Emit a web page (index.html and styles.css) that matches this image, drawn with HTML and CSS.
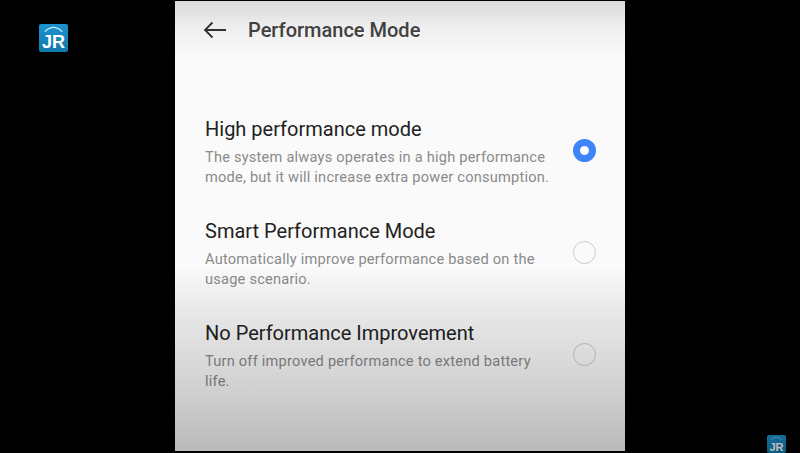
FILE: index.html
```html
<!DOCTYPE html>
<html lang="en">
<head>
    <meta charset="UTF-8">
    <meta name="viewport" content="width=device-width, initial-scale=1.0">
    <title>Performance Mode</title>
    <link rel="stylesheet" href="styles.css">
</head>
<body>
    <div class="logo logo-big">
        <svg class="logo-arc" viewBox="0 0 30 30"><path d="M6 8 Q15 -1 24 8" fill="none" stroke="#d5edf8" stroke-width="1.2"/></svg>
        <span class="logo-text">JR</span>
    </div>

    <div class="screen">
        <div class="header">
            <svg class="back" width="24" height="18" viewBox="0 0 24 18"><path d="M23 9H2M9.5 1.5 2 9l7.5 7.5" fill="none" stroke="#333" stroke-width="1.8"/></svg>
            <h1>Performance Mode</h1>
        </div>

        <div class="options">
            <div class="option">
                <div class="option-text">
                    <div class="option-title">High performance mode</div>
                    <div class="option-desc">The system always operates in a high performance mode, but it will increase extra power consumption.</div>
                </div>
                <div class="radio checked"></div>
            </div>
            <div class="option">
                <div class="option-text">
                    <div class="option-title">Smart Performance Mode</div>
                    <div class="option-desc">Automatically improve performance based on the usage scenario.</div>
                </div>
                <div class="radio"></div>
            </div>
            <div class="option">
                <div class="option-text">
                    <div class="option-title">No Performance Improvement</div>
                    <div class="option-desc">Turn off improved performance to extend battery life.</div>
                </div>
                <div class="radio"></div>
            </div>
        </div>
    </div>

    <div class="logo logo-small">
        <svg class="logo-arc" viewBox="0 0 30 30"><path d="M6 8 Q15 -1 24 8" fill="none" stroke="#8fc4dc" stroke-width="1.2"/></svg>
        <span class="logo-text">JR</span>
    </div>
</body>
</html>
```

FILE: styles.css
```css
body {
    margin: 0;
    height: 453px;
    overflow: hidden;
    background-color: #000;
    font-family: Roboto, "Noto Sans", sans-serif;
    display: flex;
    justify-content: center;
}

.screen {
    position: relative;
    width: 450px;
    height: 450px;
    margin-top: 1px;
    background-color: #fafafa;
}

/* shadow of the video fade, darkens text too */
.screen::after {
    content: "";
    position: absolute;
    inset: 0;
    pointer-events: none;
    background: linear-gradient(to bottom, rgba(0, 0, 0, 0.13) 0, rgba(0, 0, 0, 0.05) 25px, rgba(0, 0, 0, 0) 55px, rgba(0, 0, 0, 0) 265px, rgba(0, 0, 0, 0.08) 315px, rgba(0, 0, 0, 0.17) 390px, rgba(0, 0, 0, 0.26) 450px);
}

.header {
    display: flex;
    align-items: center;
    height: 58px;
    padding-left: 28px;
}

.back {
    flex-shrink: 0;
}

h1 {
    margin: 0 0 0 21px;
    font-size: 20px;
    font-weight: 500;
    color: #444;
}

.options {
    margin-top: 42px;
    padding-left: 30px;
    padding-right: 29px;
}

.option {
    display: flex;
    align-items: center;
    justify-content: space-between;
    height: 102px;
}

.option-text {
    width: 345px;
}

.option-title {
    font-size: 20px;
    line-height: 24px;
    color: #222;
    margin-bottom: 6px;
}

.option-desc {
    font-size: 14.6px;
    line-height: 20.5px;
    letter-spacing: 0.22px;
    color: #8a8a8a;
}

.radio {
    width: 23px;
    height: 23px;
    margin-bottom: 4px;
    box-sizing: border-box;
    border: 1.5px solid #c9c9c9;
    border-radius: 50%;
    flex-shrink: 0;
}

.radio.checked {
    border: 7px solid #3f84f8;
    background-color: #fff;
}

/* channel watermark */
.logo {
    position: absolute;
    border-radius: 2px;
    background: linear-gradient(to bottom, #1c93cf, #1279ac);
    color: #fff;
    font-family: "Liberation Sans", sans-serif;
    font-weight: bold;
    text-align: center;
    overflow: hidden;
}

.logo-big {
    left: 39px;
    top: 24px;
    width: 29px;
    height: 28px;
}

.logo-small {
    left: 767px;
    top: 435px;
    width: 19px;
    height: 18px;
    opacity: 0.75;
}

.logo-arc {
    position: absolute;
    left: 0;
    top: 0;
    width: 100%;
}

.logo-text {
    position: absolute;
    left: 0;
    right: 0;
}

.logo-big .logo-text {
    top: 7px;
    font-size: 18px;
    line-height: 22px;
}

.logo-small .logo-text {
    top: 7px;
    font-size: 11px;
    line-height: 11px;
}
```
